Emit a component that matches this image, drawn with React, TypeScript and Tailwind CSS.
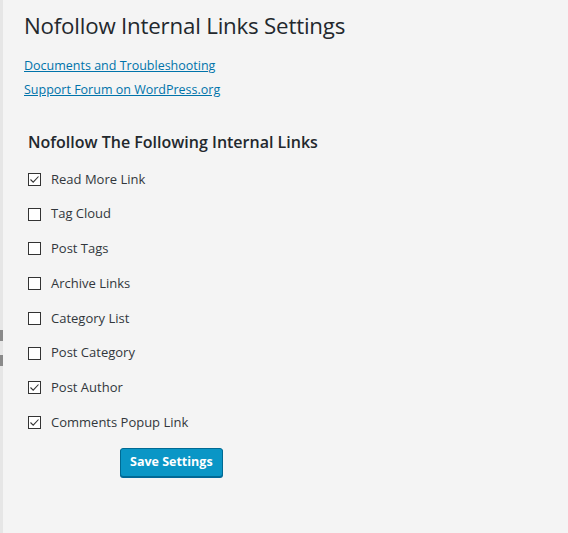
import React from 'react'

const OPTIONS = [
  { label: 'Read More Link', checked: true },
  { label: 'Tag Cloud', checked: false },
  { label: 'Post Tags', checked: false },
  { label: 'Archive Links', checked: false },
  { label: 'Category List', checked: false },
  { label: 'Post Category', checked: false },
  { label: 'Post Author', checked: true },
  { label: 'Comments Popup Link', checked: true },
]

function Box({ checked }: { checked: boolean }) {
  return (
    <span className="flex h-[13px] w-[13px] items-center justify-center border border-[#333] bg-white">
      {checked && (
        <svg width="11" height="11" viewBox="0 0 11 11" fill="none">
          <path d="M1.5 5.5 L4.2 8.2 L9.5 2.5" stroke="#333" strokeWidth="1.1" />
        </svg>
      )}
    </span>
  )
}

export default function App() {
  return (
    <div
      className="flex h-[533px] w-[568px] bg-[#f4f4f4] text-[#23282d]"
      style={{ fontFamily: '"Open Sans", "Noto Sans", sans-serif' }}
    >
      {/* left edge strip */}
      <div className="flex w-[3px] flex-col bg-[#e6e6e6]">
        <div className="h-[330px]" />
        <div className="h-[11px] w-[3px] bg-[#8a8a8a]" />
        <div className="h-[14px]" />
        <div className="h-[11px] w-[3px] bg-[#8a8a8a]" />
      </div>

      <div className="flex-1 pl-[21px] pt-[10px]">
        <h1 className="text-[22.3px] leading-[32px] tracking-[-0.2px]">Nofollow Internal Links Settings</h1>

        <div className="mt-[15px] flex flex-col gap-[6px] text-[12.5px] leading-[18px]">
          <a className="self-start text-[#0073aa] underline">Documents and Troubleshooting</a>
          <a className="self-start text-[#0073aa] underline">Support Forum on WordPress.org</a>
        </div>

        <h2 className="mt-[31px] pl-[4px] text-[16px] font-semibold leading-[24px]">
          Nofollow The Following Internal Links
        </h2>

        <div className="mt-[8px] flex flex-col pl-[4px] text-[13px] text-[#32373c]">
          {OPTIONS.map(({ label, checked }) => (
            <label key={label} className="flex h-[34.75px] items-center gap-[10px]">
              <Box checked={checked} />
              {label}
            </label>
          ))}
        </div>

        <button className="ml-[96px] mt-[8px] h-[29px] rounded-[3px] border border-[#006a93] bg-[#0a96c6] px-[9px] text-[12.5px] font-bold text-white shadow-[0_1px_0_#006799]">
          Save Settings
        </button>
      </div>
    </div>
  )
}
